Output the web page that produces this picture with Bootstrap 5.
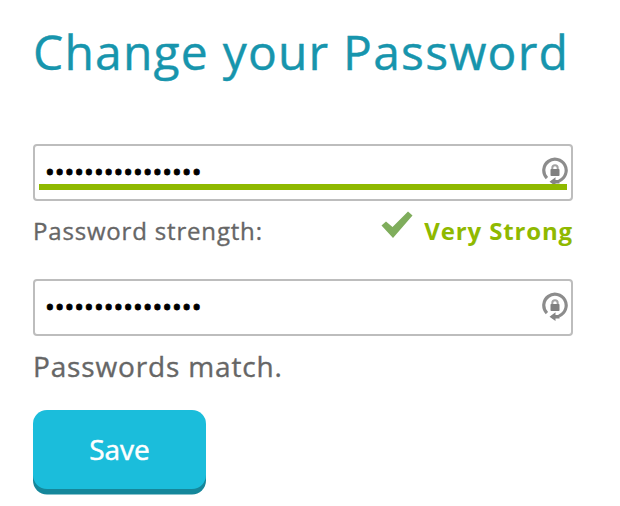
<!DOCTYPE html>
<html lang="en">
<head>
<meta charset="utf-8">
<meta name="viewport" content="width=device-width, initial-scale=1">
<title>Change your Password</title>
<link href="https://cdn.jsdelivr.net/npm/bootstrap@5.3.0/dist/css/bootstrap.min.css" rel="stylesheet">
<style>
body{font-family:"Open Sans",sans-serif;color:#666;background:#fff}
.pw-form{width:573px;padding:19px 0 10px 33px}
.pw-title{font-size:48px;line-height:66px;letter-spacing:1.2px;color:#1795ad;font-weight:400;margin-bottom:59px;white-space:nowrap;-webkit-text-stroke:.4px}
.pw-input.form-control{height:57px;border:2px solid #bdbdbd;border-radius:4px;padding:0 40px 3px 10px;font-family:"Open Sans",sans-serif;font-size:26px;color:#000;-webkit-text-stroke:.8px}
.pw-icon{right:4px;top:13px;width:28px;height:30px}
.pw-meter{left:6px;right:6px;top:40px;height:6px;background:#8fb900}
.pw-strength{height:78px;font-size:24px;line-height:34px;padding-top:13px}
.pw-label{letter-spacing:.82px;-webkit-text-stroke:.35px}
.pw-rating{color:#8fb900;font-weight:700;letter-spacing:.85px}
.pw-check{width:34px;height:30px;margin:-4px 10px 0 0}
.pw-match{font-size:28px;line-height:38px;letter-spacing:.85px;margin-top:11px;-webkit-text-stroke:.35px}
.pw-save.btn{width:173px;height:79px;margin-top:25px;border:0;border-radius:14px;background:#1bbddb;box-shadow:0 5.5px 0 #15879b;color:#fff;font-size:28px;line-height:38px;padding:0 0 2px;-webkit-text-stroke:.5px}
</style>
<script src="https://cdn.jsdelivr.net/npm/bootstrap@5.3.0/dist/js/bootstrap.bundle.min.js"></script>
</head>
<body>
<svg class="d-none">
  <symbol id="lock-cycle" viewBox="0 0 28 30">
    <path d="M5.900 21.200A11.200 11.200 0 1 1 18 23.900" fill="none" stroke="#8c8c8c" stroke-width="3.200"/>
    <path d="M8.500 24.800 14.500 20.300v2.700h4v3.400h-4V29z" fill="#858585"/>
    <path d="M11.300 12.500V11a2.700 2.700 0 0 1 5.400 0v1.500" fill="none" stroke="#a3a3a3" stroke-width="2"/>
    <rect x="9.500" y="12" width="9" height="7" rx=".8" fill="#808080"/>
  </symbol>
</svg>
<main class="pw-form">
  <h1 class="pw-title">Change your Password</h1>
  <form>
    <div class="position-relative">
      <input class="form-control pw-input shadow-none" type="password" value="abcdefghijklmnop" aria-label="New password">
      <svg class="pw-icon position-absolute"><use href="#lock-cycle"/></svg>
      <div class="pw-meter position-absolute"></div>
    </div>
    <div class="pw-strength d-flex justify-content-between align-items-start">
      <span class="pw-label">Password strength:</span>
      <span class="d-flex align-items-start">
        <svg class="pw-check" viewBox="0 0 34 30"><path d="M1.500 15.500 6 11.500l6.500 5.500L28 1.500l4.500 4L13 28z" fill="#7fad5c"/></svg>
        <span class="pw-rating">Very Strong</span>
      </span>
    </div>
    <div class="position-relative">
      <input class="form-control pw-input shadow-none" type="password" value="abcdefghijklmnop" aria-label="Confirm password">
      <svg class="pw-icon position-absolute"><use href="#lock-cycle"/></svg>
    </div>
    <div class="pw-match">Passwords match.</div>
    <button type="button" class="btn pw-save d-block">Save</button>
  </form>
</main>
</body>
</html>
